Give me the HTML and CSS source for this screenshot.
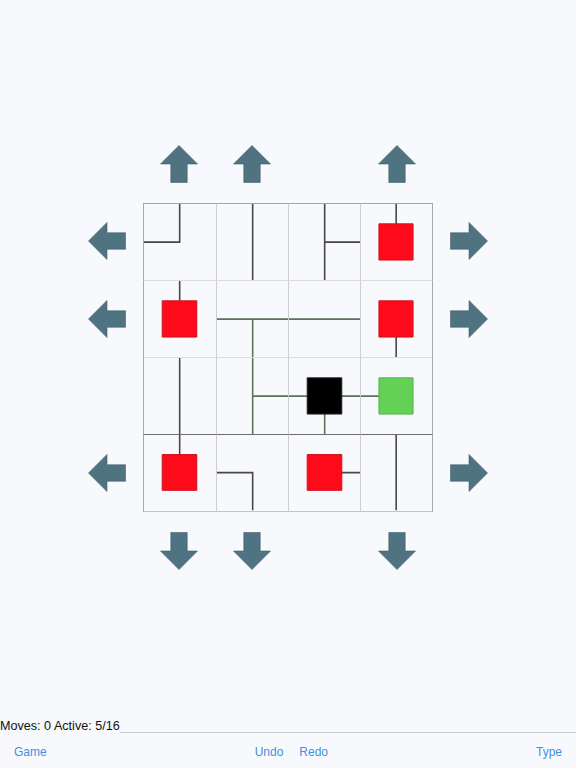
FILE: index.html
```html
<!DOCTYPE html>
<html>
<head>
<meta charset="utf-8">
<title>Net</title>
<link rel="stylesheet" href="styles.css">
</head>
<body>
<div class="app">
  <div class="play">
    <div class="stage">
      <!-- top arrows -->
      <div></div>
      <svg class="arrow a-up" viewBox="0 0 38 38"><path d="M19 .5L37.5 19H27.2V37.5H10.8V19H.5Z"/></svg>
      <svg class="arrow a-up" viewBox="0 0 38 38"><path d="M19 .5L37.5 19H27.2V37.5H10.8V19H.5Z"/></svg>
      <div></div>
      <svg class="arrow a-up" viewBox="0 0 38 38"><path d="M19 .5L37.5 19H27.2V37.5H10.8V19H.5Z"/></svg>
      <div></div>

      <!-- row 0 -->
      <svg class="arrow a-left" viewBox="0 0 38 38"><path d="M.5 19L19 .5V10.8H37.5V27.2H19V37.5Z"/></svg>
      <div class="cell c-first r-first"><svg viewBox="0 0 100 100" preserveAspectRatio="none"><path class="pipe" d="M50 0V50H0"/></svg></div>
      <div class="cell r-first"><svg viewBox="0 0 100 100" preserveAspectRatio="none"><path class="pipe" d="M50 0V100"/></svg></div>
      <div class="cell r-first"><svg viewBox="0 0 100 100" preserveAspectRatio="none"><path class="pipe" d="M50 0V100M50 50H100"/></svg></div>
      <div class="cell c-last r-first"><svg viewBox="0 0 100 100" preserveAspectRatio="none"><path class="pipe" d="M50 0V50"/><rect class="tile red" x="25.5" y="26" width="48.5" height="47.5"/></svg></div>
      <svg class="arrow a-right" viewBox="0 0 38 38"><path d="M37.5 19L19 .5V10.8H.5V27.2H19V37.5Z"/></svg>

      <!-- row 1 -->
      <svg class="arrow a-left" viewBox="0 0 38 38"><path d="M.5 19L19 .5V10.8H37.5V27.2H19V37.5Z"/></svg>
      <div class="cell c-first"><svg viewBox="0 0 100 100" preserveAspectRatio="none"><path class="pipe" d="M50 0V50"/><rect class="tile red" x="25.5" y="26" width="48.5" height="47.5"/></svg></div>
      <div class="cell"><svg viewBox="0 0 100 100" preserveAspectRatio="none"><path class="pipe on" d="M0 50H100M50 50V100"/></svg></div>
      <div class="cell"><svg viewBox="0 0 100 100" preserveAspectRatio="none"><path class="pipe on" d="M0 50H100"/></svg></div>
      <div class="cell c-last"><svg viewBox="0 0 100 100" preserveAspectRatio="none"><path class="pipe" d="M50 50V100"/><rect class="tile red" x="25.5" y="26" width="48.5" height="47.5"/></svg></div>
      <svg class="arrow a-right" viewBox="0 0 38 38"><path d="M37.5 19L19 .5V10.8H.5V27.2H19V37.5Z"/></svg>

      <!-- row 2 -->
      <div></div>
      <div class="cell c-first"><svg viewBox="0 0 100 100" preserveAspectRatio="none"><path class="pipe" d="M50 0V100"/></svg></div>
      <div class="cell"><svg viewBox="0 0 100 100" preserveAspectRatio="none"><path class="pipe on" d="M50 0V100M50 50H100"/></svg></div>
      <div class="cell"><svg viewBox="0 0 100 100" preserveAspectRatio="none"><path class="pipe on" d="M0 50H100M50 50V100"/><rect class="tile black" x="25.5" y="26" width="48.5" height="47.5"/></svg></div>
      <div class="cell c-last"><svg viewBox="0 0 100 100" preserveAspectRatio="none"><path class="pipe on" d="M0 50H50"/><rect class="tile green" x="25.5" y="26" width="48.5" height="47.5"/></svg></div>
      <div></div>

      <!-- row 3 -->
      <svg class="arrow a-left" viewBox="0 0 38 38"><path d="M.5 19L19 .5V10.8H37.5V27.2H19V37.5Z"/></svg>
      <div class="cell c-first r-last"><svg viewBox="0 0 100 100" preserveAspectRatio="none"><path class="pipe" d="M50 0V50"/><rect class="tile red" x="25.5" y="26" width="48.5" height="47.5"/></svg></div>
      <div class="cell r-last"><svg viewBox="0 0 100 100" preserveAspectRatio="none"><path class="pipe" d="M0 50H50V100"/></svg></div>
      <div class="cell r-last"><svg viewBox="0 0 100 100" preserveAspectRatio="none"><path class="pipe" d="M50 50H100"/><rect class="tile red" x="25.5" y="26" width="48.5" height="47.5"/></svg></div>
      <div class="cell c-last r-last"><svg viewBox="0 0 100 100" preserveAspectRatio="none"><path class="pipe" d="M50 0V100"/></svg></div>
      <svg class="arrow a-right" viewBox="0 0 38 38"><path d="M37.5 19L19 .5V10.8H.5V27.2H19V37.5Z"/></svg>

      <!-- bottom arrows -->
      <div></div>
      <svg class="arrow a-down" viewBox="0 0 38 38"><path d="M19 37.5L37.5 19H27.2V.5H10.8V19H.5Z"/></svg>
      <svg class="arrow a-down" viewBox="0 0 38 38"><path d="M19 37.5L37.5 19H27.2V.5H10.8V19H.5Z"/></svg>
      <div></div>
      <svg class="arrow a-down" viewBox="0 0 38 38"><path d="M19 37.5L37.5 19H27.2V.5H10.8V19H.5Z"/></svg>
      <div></div>
    </div>
  </div>
  <div class="status">
    <span class="status-text">Moves: 0 Active: 5/16</span>
    <span class="status-rule"></span>
  </div>
  <div class="toolbar">
    <span class="tb-btn">Game</span>
    <span class="tb-group"><span class="tb-btn">Undo</span><span class="tb-btn">Redo</span></span>
    <span class="tb-btn">Type</span>
  </div>
</div>
</body>
</html>
```
FILE: styles.css
```css
* { box-sizing: border-box; }
html, body { margin: 0; padding: 0; }
body {
  background: #f8f9fc;
  font-family: "Liberation Sans", Arial, sans-serif;
}
.app {
  display: flex;
  flex-direction: column;
  width: 576px;
  height: 768px;
}
.play { flex: 1; }
.stage {
  display: grid;
  grid-template-columns: 56px repeat(4, 72.35px) 56px;
  grid-template-rows: 58px repeat(4, 77.25px) 58px;
  width: 401.4px;
  margin: 144.7px auto 0;
}
.arrow { width: 38px; height: 38px; display: block; }
.arrow path { fill: #4f7381; stroke: #3f5e6a; stroke-width: .6; }
.a-up { justify-self: center; align-self: start; }
.a-down { justify-self: center; align-self: end; }
.a-left { justify-self: end; align-self: center; margin-right: 17px; }
.a-right { justify-self: start; align-self: center; margin-left: 17px; }

.cell {
  border-left: 1px solid #cfcfd3;
  border-top: 1px solid #dcdce0;
}
.cell svg { display: block; width: 100%; height: 100%; overflow: visible; }
.c-first { border-left-color: #a8a8ac; }
.c-last { border-right: 1px solid #a8a8ac; }
.r-first { border-top-color: #a4a4a8; }
.r-last { border-top-color: #6e6e70; border-bottom: 1px solid #c4c4c8; }

.pipe {
  fill: none;
  stroke: #474747;
  stroke-width: 1.6;
  vector-effect: non-scaling-stroke;
}
.pipe.on { stroke: #5a735a; }
.tile { stroke-width: 1; vector-effect: non-scaling-stroke; }
.red { fill: #fd0a1b; stroke: #d0101c; }
.black { fill: #000; stroke: #222; }
.green { fill: #62d156; stroke: #55b34c; }

.status {
  display: flex;
  align-items: flex-end;
  height: 14px;
}
.status-text {
  font-size: 12.6px;
  line-height: 14px;
  color: #111;
  white-space: nowrap;
}
.status-rule {
  flex: 1;
  border-bottom: 1px solid #c8c8cc;
}
.toolbar {
  height: 35px;
  display: flex;
  align-items: center;
  justify-content: space-between;
  padding: 2px 14px 0;
}
.tb-group { display: flex; gap: 16px; }
.tb-btn {
  font-size: 12px;
  color: #4390dc;
}
```
